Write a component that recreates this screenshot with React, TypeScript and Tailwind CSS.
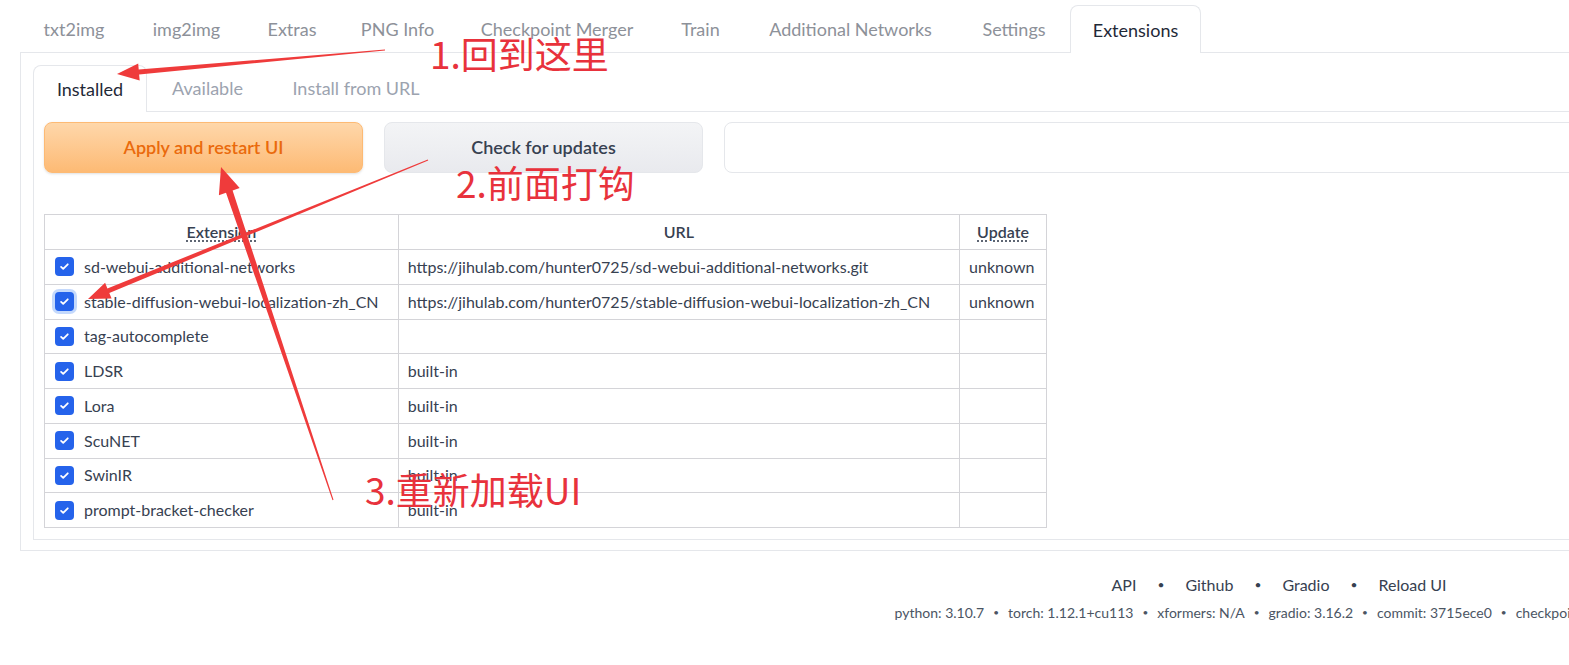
const mainTabs = [
  { label: "txt2img", w: "w-[108px]" },
  { label: "img2img", w: "w-[117px]" },
  { label: "Extras", w: "w-[94px]" },
  { label: "PNG Info", w: "w-[117px]" },
  { label: "Checkpoint Merger", w: "w-[202px]" },
  { label: "Train", w: "w-[85px]" },
  { label: "Additional Networks", w: "w-[215px]" },
  { label: "Settings", w: "w-[112px]" },
  { label: "Extensions", w: "w-[131px]", active: true },
];

const subTabs = [
  { label: "Installed", w: "w-[114px]", active: true },
  { label: "Available", w: "w-[121px]" },
  { label: "Install from URL", w: "w-[176px]" },
];

const extensions = [
  { name: "sd-webui-additional-networks", url: "https://jihulab.com/hunter0725/sd-webui-additional-networks.git", update: "unknown" },
  { name: "stable-diffusion-webui-localization-zh_CN", url: "https://jihulab.com/hunter0725/stable-diffusion-webui-localization-zh_CN", update: "unknown", focus: true },
  { name: "tag-autocomplete", url: "", update: "" },
  { name: "LDSR", url: "built-in", update: "" },
  { name: "Lora", url: "built-in", update: "" },
  { name: "ScuNET", url: "built-in", update: "" },
  { name: "SwinIR", url: "built-in", update: "" },
  { name: "prompt-bracket-checker", url: "built-in", update: "" },
];

const versions = [
  "python: 3.10.7",
  "torch: 1.12.1+cu113",
  "xformers: N/A",
  "gradio: 3.16.2",
  "commit: 3715ece0",
  "checkpoint: 7f96a1a9ca",
];

// tapered screenshot-style arrow, thin at the tail and with a filled head
function arrowPoints(
  x1: number, y1: number, x2: number, y2: number,
  shaft: number, head: number, headLen: number
) {
  const dx = x2 - x1;
  const dy = y2 - y1;
  const len = Math.hypot(dx, dy);
  const ux = dx / len;
  const uy = dy / len;
  const nx = -uy;
  const ny = ux;
  const bx = x2 - ux * headLen;
  const by = y2 - uy * headLen;
  const pts = [
    [x1 + nx * 0.5, y1 + ny * 0.5],
    [bx + nx * shaft / 2, by + ny * shaft / 2],
    [bx + nx * head / 2, by + ny * head / 2],
    [x2, y2],
    [bx - nx * head / 2, by - ny * head / 2],
    [bx - nx * shaft / 2, by - ny * shaft / 2],
    [x1 - nx * 0.5, y1 - ny * 0.5],
  ];
  return pts.map((p) => p[0].toFixed(1) + "," + p[1].toFixed(1)).join(" ");
}

function Checkbox({ focus }: { focus?: boolean }) {
  return (
    <span
      className={
        "flex h-[19px] w-[19px] shrink-0 items-center justify-center rounded-[4px] bg-[#2563eb] " +
        (focus ? "shadow-[0_0_0_3px_rgba(59,130,246,0.3)]" : "")
      }
    >
      <svg viewBox="0 0 16 16" className="h-[13px] w-[13px]" fill="none" stroke="white" strokeWidth={2.2} strokeLinecap="round" strokeLinejoin="round">
        <path d="M3.8 8.4l2.6 2.5 5.6-5.6" />
      </svg>
    </span>
  );
}

export default function App() {
  return (
    <div className="relative h-[665px] w-[1569px] overflow-hidden bg-white font-['Lato','Noto_Sans',sans-serif]">
      <div className="w-[2558px] px-[20px]">
        {/* top tabs */}
        <div className="flex h-[53px] border-b border-[#e5e7eb] pt-[5px]">
          {mainTabs.map((t) =>
            t.active ? (
              <div
                key={t.label}
                className={`${t.w} -mb-px flex h-[48px] items-center justify-center rounded-t-lg border border-b-0 border-[#e5e7eb] bg-white pt-px text-[18px] text-[#1f2937]`}
              >
                {t.label}
              </div>
            ) : (
              <div key={t.label} className={`${t.w} flex items-center justify-center pt-px text-[18px] text-[#8d9199]`}>
                {t.label}
              </div>
            )
          )}
        </div>

        {/* extensions panel */}
        <div className="border-x border-b border-[#e5e7eb] px-[12px] pt-[12px] pb-[10px]">
          <div className="flex h-[47px] border-b border-[#e5e7eb]">
            {subTabs.map((t) =>
              t.active ? (
                <div
                  key={t.label}
                  className={`${t.w} -mb-px flex h-[47px] items-center justify-center rounded-t-lg border border-b-0 border-[#e5e7eb] bg-white text-[18px] text-[#1f2937]`}
                >
                  {t.label}
                </div>
              ) : (
                <div key={t.label} className={`${t.w} flex items-center justify-center text-[18px] text-[#9ca3af]`}>
                  {t.label}
                </div>
              )
            )}
          </div>

          <div className="border-x border-b border-[#e5e7eb] px-[10px] pt-[10px] pb-[11px]">
            <div className="flex h-[51px] gap-[21px]">
              <button className="w-[319px] rounded-lg border border-[#fdba74] bg-gradient-to-b from-[#fed7aa] to-[#fdba74] text-[18px] font-semibold text-[#ea6a0c] shadow-sm">
                Apply and restart UI
              </button>
              <button className="w-[319px] rounded-lg border border-[#e5e7eb] bg-gradient-to-b from-[#f3f4f6] to-[#e9eaee] text-[18px] font-semibold text-[#374151]">
                Check for updates
              </button>
              <div className="flex-1 rounded-lg border border-[#e5e7eb] bg-white" />
            </div>

            <table className="mt-[41px] w-[1003px] border-collapse text-[16px] text-[#374151]">
              <thead>
                <tr className="h-[35px]">
                  <th className="w-[354px] border border-[#d4d4d8] font-semibold">
                    <span className="underline decoration-dotted underline-offset-[3px]">Extension</span>
                  </th>
                  <th className="w-[562px] border border-[#d4d4d8] font-semibold">URL</th>
                  <th className="w-[87px] border border-[#d4d4d8] font-semibold">
                    <span className="underline decoration-dotted underline-offset-[3px]">Update</span>
                  </th>
                </tr>
              </thead>
              <tbody>
                {extensions.map((e) => (
                  <tr key={e.name} className="h-[34.75px]">
                    <td className="border border-[#d4d4d8] px-[10px]">
                      <div className="flex items-center gap-[10px]">
                        <Checkbox focus={e.focus} />
                        <span className="whitespace-nowrap">{e.name}</span>
                      </div>
                    </td>
                    <td className="whitespace-nowrap border border-[#d4d4d8] px-[9px]">{e.url}</td>
                    <td className="border border-[#d4d4d8] px-[9px]">{e.update}</td>
                  </tr>
                ))}
              </tbody>
            </table>
          </div>
        </div>

        {/* footer */}
        <div className="mt-[22px] flex items-center justify-center gap-[21px] text-[16px] text-[#374151]">
          <span>API</span>
          <span className="text-[12px]">•</span>
          <span>Github</span>
          <span className="text-[12px]">•</span>
          <span>Gradio</span>
          <span className="text-[12px]">•</span>
          <span>Reload UI</span>
        </div>
        <div className="mt-[5px] flex items-center justify-center gap-[9px] text-[14px] text-[#4b5563]">
          {versions.map((v, i) => (
            <span key={v} className="flex items-center gap-[9px]">
              {i > 0 && <span className="text-[10px]">•</span>}
              <span>{v}</span>
            </span>
          ))}
        </div>
      </div>

      {/* red annotations drawn over the screenshot */}
      <svg className="pointer-events-none absolute left-0 top-0" width="1569" height="665">
        <polygon points={arrowPoints(385, 50, 117, 74, 5, 17, 22)} fill="#ef3b3b" />
        <polygon points={arrowPoints(428, 160, 88, 299, 5, 17, 22)} fill="#ef3b3b" />
        <polygon points={arrowPoints(333, 500, 221, 167, 7, 22, 26)} fill="#ef3b3b" />
      </svg>
      <span className="pointer-events-none absolute left-[430px] top-[28px] whitespace-nowrap font-['Noto_Sans_CJK_SC',sans-serif] text-[37px] leading-[50px] text-[#e8323c]">
        1.回到这里
      </span>
      <span className="pointer-events-none absolute left-[456px] top-[157px] whitespace-nowrap font-['Noto_Sans_CJK_SC',sans-serif] text-[37px] leading-[50px] text-[#e8323c]">
        2.前面打钩
      </span>
      <span className="pointer-events-none absolute left-[365px] top-[464px] whitespace-nowrap font-['Noto_Sans_CJK_SC',sans-serif] text-[37px] leading-[50px] text-[#e8323c]">
        3.重新加载UI
      </span>
    </div>
  );
}
